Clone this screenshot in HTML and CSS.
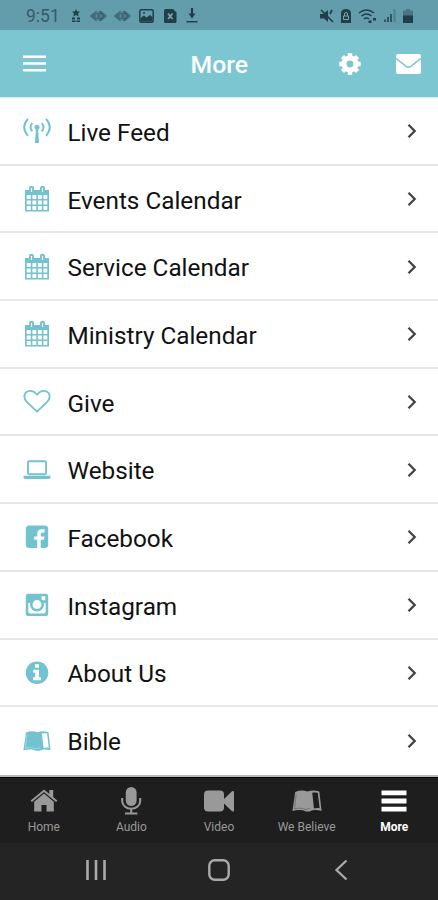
FILE: index.html
```html
<!DOCTYPE html>
<html lang="en">
<head>
<meta charset="UTF-8" />
<meta name="viewport" content="width=device-width, initial-scale=1" />
<title>More</title>
<link rel="stylesheet" href="styles.css">
</head>
<body>

<!-- Shared icons -->
<svg class="sprite" width="0" height="0">
  <symbol id="calendar" viewBox="0 0 28 28">
    <path d="M2 5h4V3.200a2.500 2.500 0 0 1 5 0V5h6V3.200a2.500 2.500 0 0 1 5 0V5h4v21.500H2z" fill="currentColor"/>
    <path d="M7.900 3h1.200v4H7.900zM18.900 3h1.200v4h-1.200z" fill="#fff"/>
    <path d="M3.700 10h4.100v4H3.700zM9.400 10h3.900v4H9.400zM14.900 10h3.900v4h-3.900zM20.400 10h3.900v4h-3.900zM3.700 15.400h4.100v4H3.700zM9.400 15.400h3.900v4H9.400zM14.900 15.400h3.900v4h-3.900zM20.400 15.400h3.900v4h-3.900zM3.700 21h4.100v4H3.700zM9.400 21h3.900v4H9.400zM14.900 21h3.900v4h-3.900zM20.400 21h3.900v4h-3.900z" fill="#fff"/>
  </symbol>
  <symbol id="book" viewBox="0 0 28 28">
    <path d="M3 5.500C7 4 11 3.900 14.500 5.200c3.500-1.300 7.500-1.200 11 0L27.600 23.300c-4-1.300-8-1.300-11 .5h-3.800c-3-1.700-8-1.800-12.400-.5z" fill="currentColor"/>
    <path class="book-page" d="M18.900 6.400c2-.4 3.700-.3 5.200.2L25.800 20.700c-1.900-.3-3.800-.2-5.300.4z"/>
    <path class="book-edge" d="M3.900 8L2.300 21.300c3.900-1 7.500-.7 10.800.8 1-.7 2-1.100 3.700-1.400" fill="none" stroke-width=".7"/>
  </symbol>
  <symbol id="eye" viewBox="0 0 18 12">
    <path d="M7 1L1 6l6 5M11 1l6 5-6 5M3.500 6L7 3.300h1.500v5.400H7zM10.500 2v8L14.500 6z" fill="none" stroke="currentColor" stroke-width="1.300"/>
    <path d="M5 6h3M11 6h3M9.500 1v10" stroke="currentColor" stroke-width=".8"/>
  </symbol>
</svg>

<div class="status-bar">
  <span class="clock">9:51</span>
  <div class="status-left">
    <svg width="10" height="14" viewBox="0 0 10 14"><path d="M5 0l1.200 2.500H9L7 4.500l.7 3L5 6 2.300 7.500l.7-3-2-2h2.800zM1 8.500h3v2H1zM6 8.500h3v2H6zM1 11.500h3.500V13H1zM5.500 11.500H9V13H5.500z" fill="currentColor"/></svg>
    <svg class="eye" width="17" height="12"><use href="#eye"/></svg>
    <svg class="eye" width="17" height="12"><use href="#eye"/></svg>
    <svg width="15" height="14" viewBox="0 0 15 14"><rect x=".8" y=".8" width="13.400" height="12.400" rx="1.500" fill="none" stroke="currentColor" stroke-width="1.500"/><path d="M1.500 12.500V9L5 6.500l2.500 2L11 6l2.500 2v4.500z" fill="currentColor"/><circle cx="5" cy="4" r="1" fill="currentColor"/></svg>
    <svg width="13" height="14" viewBox="0 0 13 14"><path d="M1.500 0H9l3.500 3.500v9q0 1.500-1.500 1.500H1.500Q0 14 0 12.500v-11Q0 0 1.500 0z" fill="currentColor"/><path d="M4 4.500l4.500 5.500M8.500 4.500L4 10" stroke="#7ba9b3" stroke-width="1.600"/></svg>
    <svg width="12" height="15" viewBox="0 0 12 15"><path d="M6 0v8" stroke="currentColor" stroke-width="2.200"/><path d="M2.500 5.500h7L6 10.500zM.5 13h11v1.500H.5z" fill="currentColor"/></svg>
  </div>
  <div class="status-right">
    <svg width="14" height="14" viewBox="0 0 14 14"><path d="M0 5h3l5-4v12L4 9.500H0z" fill="currentColor"/><path d="M1 1l12 12M10 5l2-4" stroke="currentColor" stroke-width="1.700"/></svg>
    <svg width="10" height="14" viewBox="0 0 10 14"><path d="M0 14V4.500Q0 0 5 0t5 4.500V14z" fill="currentColor"/><path d="M3.500 7V5a1.500 1.500 0 0 1 3 0v2M2.500 7h5v3.500h-5z" fill="none" stroke="#7ba7a6" stroke-width="1"/></svg>
    <svg width="19" height="14" viewBox="0 0 19 14"><path d="M1 4q7.500-6 15 0M3.500 7Q8.500 3 13.500 7M6 10q2.500-2 5 0" fill="none" stroke="currentColor" stroke-width="1.500"/><path d="M10.500 11.500h3V14h-3zM15 9h3v2.500h-3z" fill="currentColor"/></svg>
    <svg width="12" height="13" viewBox="0 0 12 13"><path d="M0 10.500h2V13H0zM3 8h2v5H3zM6 5h2v8H6z" fill="currentColor" opacity=".75"/><path d="M9.500 0h2v13h-2z" fill="currentColor" opacity=".3"/></svg>
    <svg width="10" height="14" viewBox="0 0 10 14"><path d="M3 0h4v1.500h3V7H0V1.500h3z" fill="currentColor" opacity=".4"/><path d="M0 6.500h10V14H0z" fill="currentColor"/></svg>
  </div>
</div>

<header class="app-bar">
  <svg class="menu-icon" width="23" height="17" viewBox="0 0 23 17"><path d="M0 1.700h23M0 8.500h23M0 15.300h23" stroke="#fff" stroke-width="2.600"/></svg>
  <h1>More</h1>
  <svg class="gear-icon" width="22" height="22" viewBox="0 0 22 22">
    <circle cx="11" cy="11" r="6" fill="none" stroke="#fff" stroke-width="5"/>
    <path d="M11 .3v21.400M.3 11h21.400M3.500 3.500l15 15M18.500 3.500l-15 15" stroke="#fff" stroke-width="4.500"/>
    <circle cx="11" cy="11" r="3.400" fill="#7cc6d2"/>
  </svg>
  <svg class="mail-icon" width="25" height="20" viewBox="0 0 26 20" preserveAspectRatio="none"><rect width="26" height="20" rx="2" fill="#fff"/><path d="M0 4.300l10.500 8q2.500 1.800 5 0l10.500-8" fill="none" stroke="#7cc6d2" stroke-width="1.500"/></svg>
</header>

<main class="menu">
  <a class="row">
    <svg class="icon" viewBox="0 0 28 28"><circle cx="14" cy="10.300" r="2.500" fill="currentColor"/><path d="M13 11h2l1 15h-4z" fill="currentColor"/><path d="M9.300 6.200q-3.600 4.100 0 8.200M18.700 6.200q3.600 4.100 0 8.200M5 1.800q-7.600 8.500 0 17M23 1.800q7.600 8.500 0 17" fill="none" stroke="currentColor" stroke-width="1.900"/></svg>
    <span>Live Feed</span>
    <svg class="chevron" viewBox="0 0 10 16"><path d="M1.500 1.800L7.700 8l-6.200 6.200"/></svg>
  </a>
  <a class="row">
    <svg class="icon"><use href="#calendar"/></svg>
    <span>Events Calendar</span>
    <svg class="chevron" viewBox="0 0 10 16"><path d="M1.500 1.800L7.700 8l-6.200 6.200"/></svg>
  </a>
  <a class="row">
    <svg class="icon"><use href="#calendar"/></svg>
    <span>Service Calendar</span>
    <svg class="chevron" viewBox="0 0 10 16"><path d="M1.500 1.800L7.700 8l-6.200 6.200"/></svg>
  </a>
  <a class="row">
    <svg class="icon"><use href="#calendar"/></svg>
    <span>Ministry Calendar</span>
    <svg class="chevron" viewBox="0 0 10 16"><path d="M1.500 1.800L7.700 8l-6.200 6.200"/></svg>
  </a>
  <a class="row">
    <svg class="icon" viewBox="0 0 28 28"><path d="M14 23.700L4 14.200C-.5 9.500 1 3.300 7 2.800c3.500-.2 5.500 2 7 4 1.500-2 3.500-4.200 7-4 6 .5 7.500 6.700 3 11.400z" fill="none" stroke="currentColor" stroke-width="1.800" stroke-linejoin="round"/></svg>
    <span>Give</span>
    <svg class="chevron" viewBox="0 0 10 16"><path d="M1.500 1.800L7.700 8l-6.200 6.200"/></svg>
  </a>
  <a class="row">
    <svg class="icon" viewBox="0 0 28 28"><rect x="4.900" y="5.300" width="18.200" height="13" rx="1.500" fill="none" stroke="currentColor" stroke-width="1.900"/><path d="M.5 19.800h27v1.300q0 1.900-2 1.900h-23q-2 0-2-1.900z" fill="currentColor"/></svg>
    <span>Website</span>
    <svg class="chevron" viewBox="0 0 10 16"><path d="M1.500 1.800L7.700 8l-6.200 6.200"/></svg>
  </a>
  <a class="row">
    <svg class="icon" viewBox="0 0 28 28"><rect x="2.800" y="2.500" width="22.400" height="22.600" rx="3.500" fill="currentColor"/><path d="M14.200 25.100v-8.300h-3v-3.300h3v-2.600q0-4.600 4.500-4.600h2.800v3.200h-1.900q-1.900 0-1.900 1.800v2.200h3.700l-.5 3.300h-3.200v8.300z" fill="#fff"/></svg>
    <span>Facebook</span>
    <svg class="chevron" viewBox="0 0 10 16"><path d="M1.500 1.800L7.700 8l-6.200 6.200"/></svg>
  </a>
  <a class="row">
    <svg class="icon" viewBox="0 0 28 28"><rect x="2.800" y="2.700" width="22.400" height="22.400" rx="2.700" fill="currentColor"/><path d="M5.300 12h17.400v8.700q0 1.800-1.800 1.800H7.100q-1.800 0-1.800-1.800zM18.500 5.300h3.800v4h-3.800z" fill="#fff"/><circle cx="14" cy="13.600" r="7" fill="currentColor"/><circle cx="14" cy="13.600" r="4.500" fill="#fff"/></svg>
    <span>Instagram</span>
    <svg class="chevron" viewBox="0 0 10 16"><path d="M1.500 1.800L7.700 8l-6.200 6.200"/></svg>
  </a>
  <a class="row">
    <svg class="icon" viewBox="0 0 28 28"><circle cx="14" cy="13.800" r="11.300" fill="currentColor"/><path d="M12 5.300h4v3.500h-4zM10.200 10.800h5.800v7.500h1.900v3h-7.700v-3h1.900v-4.600h-1.900z" fill="#fff"/></svg>
    <span>About Us</span>
    <svg class="chevron" viewBox="0 0 10 16"><path d="M1.500 1.800L7.700 8l-6.200 6.200"/></svg>
  </a>
  <a class="row">
    <svg class="icon book"><use href="#book"/></svg>
    <span>Bible</span>
    <svg class="chevron" viewBox="0 0 10 16"><path d="M1.500 1.800L7.700 8l-6.200 6.200"/></svg>
  </a>
</main>

<nav class="tabs">
  <a class="tab">
    <svg viewBox="0 0 28 28"><path d="M14 6.500l9.800 8.300V24.500h-7.300V18h-5v6.500H4.200v-9.700z" fill="currentColor"/><path d="M1.300 14.300L14 3.700l12.700 10.600" fill="none" stroke="currentColor" stroke-width="2"/><path d="M19.300 3h3.900v8l-3.900-3z" fill="currentColor"/></svg>
    <span>Home</span>
  </a>
  <a class="tab">
    <svg viewBox="0 0 28 28"><rect x="8.800" y="0" width="10.800" height="19" rx="5.400" fill="currentColor"/><path d="M5.200 11v3a9 7.700 0 0 0 18 0v-3M14.200 22v4M8 26.500h12.400" fill="none" stroke="currentColor" stroke-width="2.100"/></svg>
    <span>Audio</span>
  </a>
  <a class="tab">
    <svg class="wide" viewBox="0 0 32 28"><rect x="1" y="3.500" width="20" height="21" rx="4" fill="currentColor"/><path d="M21 12l8-7.700q2-.7 2 1v18q0 1.700-2 1l-8-7.800z" fill="currentColor"/></svg>
    <span>Video</span>
  </a>
  <a class="tab book">
    <svg class="wide" viewBox="0 0 32 28"><use href="#book" x="0" y="-1" width="32" height="30"/></svg>
    <span>We Believe</span>
  </a>
  <a class="tab active">
    <svg viewBox="0 0 28 28"><path d="M1.500 5.800h25M1.500 14h25M1.500 22.200h25" stroke="currentColor" stroke-width="4.800"/></svg>
    <span>More</span>
  </a>
</nav>

<div class="system-nav">
  <svg width="20" height="22" viewBox="0 0 20 22"><path d="M1.500 1v20M10 1v20M18.500 1v20" stroke="currentColor" stroke-width="2.600"/></svg>
  <svg width="22" height="22" viewBox="0 0 22 22"><rect x="1.300" y="1.300" width="19.400" height="19.400" rx="5.500" fill="none" stroke="currentColor" stroke-width="2.400"/></svg>
  <svg width="14" height="22" viewBox="0 0 14 22"><path d="M12.500 1.500L2.500 11l10 9.500" fill="none" stroke="currentColor" stroke-width="2.300"/></svg>
</div>

</body>
</html>
```
FILE: styles.css
```css
* { box-sizing: border-box; }
body {
  margin: 0;
  width: 438px; height: 900px;
  font-family: Roboto, sans-serif;
  background: #fff;
  color: #111;
  display: flex; flex-direction: column;
  overflow: hidden;
}
svg { display: block; flex: none; }
.sprite { position: absolute; }

/* Status bar */
.status-bar {
  height: 29.5px;
  flex: none;
  padding: 2px 25px 0 26px;
  display: flex; align-items: center;
  background: #639cab;
  color: #203f4b;
}
.clock {
  width: 45px;
  font-size: 17.5px;
  color: #355b67;
}
.status-left { display: flex; align-items: center; gap: 9.4px; }
.status-right { display: flex; align-items: center; gap: 7px; margin-left: auto; }
.eye { color: #3b6370; }
.eye + .eye { margin: 0 -1px 0 -3px; }

/* App bar */
.app-bar {
  height: 68.5px;
  flex: none;
  padding: 0 17px 0 23px;
  display: grid;
  grid-template-columns: 23px 1fr 22px 25px;
  align-items: center;
  background: #7cc6d2;
  border-bottom: 1px solid #d5eef5;
}
.app-bar h1 {
  margin: 3px 0 0 144.5px;
  font-size: 24.75px;
  font-weight: 500;
  color: #fff;
}
.gear-icon { margin-left: -35px; }
.app-bar .gear-icon, .app-bar .mail-icon { margin-top: 1px; }

/* Menu rows */
.menu {
  height: 679px;
  flex: none;
  border-bottom: 2px solid #bbb;
}
.row {
  height: 67.7px;
  padding: 1px 21px 0 23px;
  display: flex; align-items: center;
  border-bottom: 2px solid #e7e7e7;
  font-size: 24.3px;
}
.row:last-child { border-bottom-color: #fff; }
.row span { flex: 1; margin: 2px 0 0 16.5px; }
.icon { width: 28px; height: 28px; color: #72c2cf; }
.chevron {
  width: 10px; height: 16px;
  fill: none; stroke: #444; stroke-width: 2.3;
}
.book { --page: #fff; --edge: #b5e0e7; }
.book-page { fill: var(--page); }
.book-edge { stroke: var(--edge); }

/* Tabs */
.tabs {
  height: 65.5px;
  flex: none;
  padding-top: 8.5px;
  display: grid; grid-template-columns: repeat(5, 1fr);
  background: #1e1e1e;
  border-top: 1px solid #000;
}
.tab {
  display: flex; flex-direction: column; align-items: center;
  gap: 5px;
  font-size: 12px;
  line-height: 14px;
  white-space: nowrap;
  color: #999;
}
.tab svg { width: 28px; height: 28px; }
.tab .wide { width: 32px; }
.tab.book { --page: #1e1e1e; --edge: #666; }
.tab.active { color: #fff; font-weight: 700; }

/* Android buttons */
.system-nav {
  flex: 1;
  padding: 0 90px 2px 86px;
  display: flex; align-items: center; justify-content: space-between;
  background: #242424;
  color: #aaa;
}
.system-nav svg:nth-child(2) { margin-left: -3px; }
```
